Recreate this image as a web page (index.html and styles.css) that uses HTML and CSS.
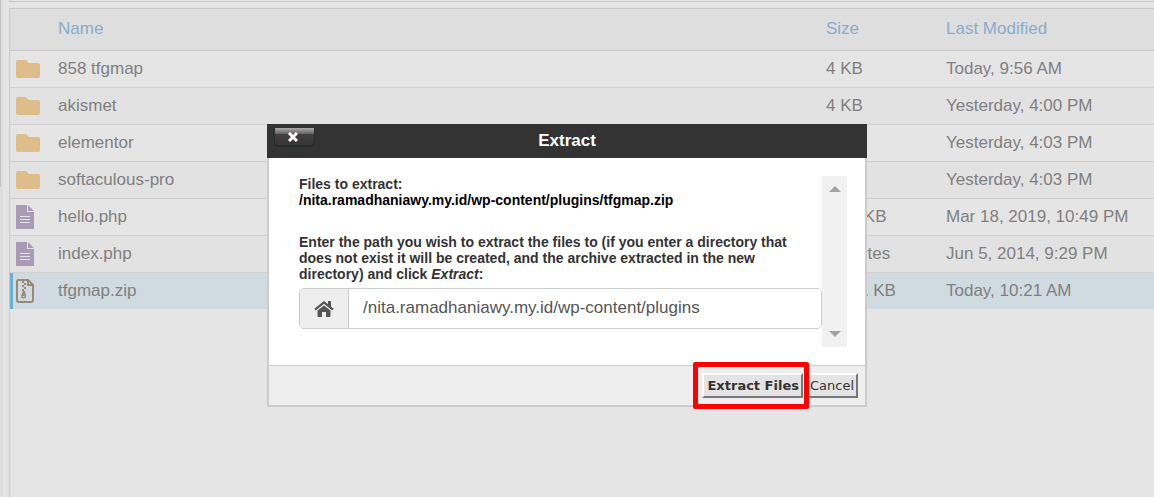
FILE: index.html
```html
<!DOCTYPE html>
<html lang="en">
<head>
<meta charset="utf-8">
<title>File Manager</title>
<link rel="stylesheet" href="styles.css">
</head>
<body>
<svg class="symbols" aria-hidden="true">
  <symbol id="folder" viewBox="0 0 24 18"><path d="M2 0h8l3 3h9a2 2 0 0 1 2 2v11a2 2 0 0 1-2 2H2a2 2 0 0 1-2-2V2a2 2 0 0 1 2-2z"/></symbol>
  <symbol id="file" viewBox="0 0 18 24"><path fill-rule="evenodd" d="M0 0h11v7h7v17H0zM12 0l6 6h-6zM4 11h10v1H4zM4 14h10v1H4zM4 17h10v1H4z"/></symbol>
  <symbol id="zip" viewBox="0 0 18 24"><path d="M2 1h10l5 5v15a2 2 0 0 1-2 2H3a2 2 0 0 1-2-2V2a1 1 0 0 1 1-1zM12 1v5h5" fill="none" stroke="currentColor" stroke-width="2"/><path d="M6 2h2v2H6zM8 4h2v2H8zM6 6h2v2H6zM8 8h2v2H8zM6 10h2v2H6z"/><path fill-rule="evenodd" d="M7 12h2l1 5a2.500 2.500 0 1 1-5 0zM6.500 17v1h2v-1z"/></symbol>
  <symbol id="home" viewBox="0 0 20 16"><path d="M10 4.400l6.500 5V15a1 1 0 0 1-1 1H12v-5H8v5H4.500a1 1 0 0 1-1-1V9.400z"/><path d="M1 8.600L10 1.400l9 7.200" fill="none" stroke="currentColor" stroke-width="2.200"/><path d="M14 0h3v7l-3-2z"/></symbol>
</svg>
<div class="app">
  <aside class="rail"><div class="rail-thumb"></div></aside>
  <main class="content">
    <div class="toolbar"></div>
    <div class="listing">
      <table class="files">
        <thead><tr><th class="col-icon"></th><th class="col-name">Name</th><th class="col-size">Size</th><th class="col-date">Last Modified</th></tr></thead>
        <tbody>
          <tr><td><svg class="folder"><use href="#folder"/></svg></td><td>858 tfgmap</td><td>4 KB</td><td>Today, 9:56 AM</td></tr>
          <tr><td><svg class="folder"><use href="#folder"/></svg></td><td>akismet</td><td>4 KB</td><td>Yesterday, 4:00 PM</td></tr>
          <tr><td><svg class="folder"><use href="#folder"/></svg></td><td>elementor</td><td>4 KB</td><td>Yesterday, 4:03 PM</td></tr>
          <tr><td><svg class="folder"><use href="#folder"/></svg></td><td>softaculous-pro</td><td>4 KB</td><td>Yesterday, 4:03 PM</td></tr>
          <tr><td><svg class="file"><use href="#file"/></svg></td><td>hello.php</td><td>2.52 KB</td><td>Mar 18, 2019, 10:49 PM</td></tr>
          <tr><td><svg class="file"><use href="#file"/></svg></td><td>index.php</td><td>28 bytes</td><td>Jun 5, 2014, 9:29 PM</td></tr>
          <tr class="selected"><td><svg class="file zip"><use href="#zip"/></svg></td><td>tfgmap.zip</td><td>10.21 KB</td><td>Today, 10:21 AM</td></tr>
        </tbody>
      </table>
    </div>
  </main>
</div>
<div class="overlay">
  <section class="dialog" role="dialog" aria-labelledby="dialog-title">
    <header class="dialog-head">
      <button class="close" type="button" aria-label="Close"><svg viewBox="0 0 10 10"><path d="M1 1l8 8M9 1L1 9"/></svg></button>
      <h1 class="dialog-title" id="dialog-title">Extract</h1>
    </header>
    <div class="dialog-body">
      <div class="scroll-area">
        <div class="form">
          <p class="text">Files to extract:<br><span class="path">/nita.ramadhaniawy.my.id/wp-content/plugins/tfgmap.zip</span></p>
          <label class="text prompt" for="target">Enter the path you wish to extract the files to (if you enter a directory that does not exist it will be created, and the archive extracted in the new directory) and click <em>Extract</em>:</label>
          <div class="field">
            <span class="addon"><svg class="home"><use href="#home"/></svg></span>
            <input class="target" id="target" type="text" value="/nita.ramadhaniawy.my.id/wp-content/plugins">
          </div>
        </div>
        <div class="scrollbar" aria-hidden="true">
          <svg class="arrow" viewBox="0 0 12 6"><path d="M0 6l6-6 6 6z"/></svg>
          <svg class="arrow" viewBox="0 0 12 6"><path d="M0 0l6 6 6-6z"/></svg>
        </div>
      </div>
    </div>
    <footer class="dialog-foot">
      <div class="highlight"><button class="btn primary" type="button">Extract Files</button></div>
      <button class="btn" type="button">Cancel</button>
    </footer>
  </section>
</div>
</body>
</html>
```
FILE: styles.css
```css
* { box-sizing: border-box; }
body {
  margin: 0;
  background: #e5e5e5;
  color: #808080;
  font: 17px/20px "Liberation Sans", Arial, sans-serif;
}
svg { display: block; fill: currentColor; }
.symbols { position: absolute; width: 0; height: 0; }
.app { display: flex; height: 100vh; overflow: hidden; }
.rail { width: 3px; background: #ddd; }
.rail-thumb { width: 1px; height: 187px; background: #c4c4c4; }
.content { flex: 1; display: flex; flex-direction: column; gap: 6px; padding-left: 6px; }
.toolbar { height: 2px; border: solid #c9c9c9; border-width: 0 0 1px 1px; }
.listing { flex: 1; border: solid #c9c9c9; border-width: 1px 0 0 1px; }
.files { width: 100%; border-collapse: separate; border-spacing: 0; table-layout: fixed; }
.files th {
  height: 42px;
  padding: 0 0 1px;
  border-bottom: 1px solid #c9c9c9;
  background: #dedede;
  color: #8aaccd;
  font-weight: 400;
  text-align: left;
}
.files td { height: 37px; padding: 0; border-bottom: 1px solid #d0d0d0; }
.files td:first-child { padding: 0 0 0 6px; }
.files tr:nth-child(even) td { background: #e2e2e2; }
.files .selected td { background: #d0dbe1; border-bottom-color: #e5e5e5; }
.files .selected td:first-child { box-shadow: inset 3px 0 #6bb1d1; }
.col-icon { width: 48px; }
.col-size { width: 120px; }
.col-date { width: 208px; }
.folder { width: 24px; height: 18px; color: #debd8a; }
.file { width: 18px; height: 24px; color: #a99bb6; }
.zip { color: #9d8872; }

.overlay {
  position: fixed;
  inset: 0;
  display: flex;
  justify-content: center;
  align-items: flex-start;
  padding: 124px 20px 0 0;
}
.dialog { width: 600px; background: #fff; }
.dialog-head {
  position: relative;
  padding: 7px 0;
  background: #333;
  color: #fff;
  text-align: center;
}
.dialog-title { margin: 0; font-size: 17px; line-height: 20px; }
.close {
  position: absolute;
  top: 4px;
  left: 7px;
  width: 41px;
  height: 19px;
  padding: 0 0 0 13px;
  border: solid #222b2e;
  border-width: 0 1px 2px;
  border-radius: 0 0 5px 5px;
  background: linear-gradient(#aaa, #666 33%, #443e3e 34%, #383535);
  color: #fff;
}
.close svg { width: 10px; height: 10px; stroke: #fff; stroke-width: 3; }
.dialog-body { padding: 18px; border: solid #ccc; border-width: 0 2px; }
.scroll-area { display: flex; margin-left: 12px; height: 171px; }
.form { flex: 1; }
.text { display: block; margin: 0; color: #333; font-size: 14px; line-height: 16px; font-weight: 700; }
.path { color: #000; }
.prompt { margin: 26px 0 6px; }
.field { display: flex; height: 41px; border: 1px solid #ccc; border-radius: 5px; overflow: hidden; }
.addon {
  width: 49px;
  display: grid;
  place-items: center;
  border-right: 1px solid #ccc;
  background: #eee;
  color: #555;
}
.home { width: 20px; height: 16px; }
.target { flex: 1; min-width: 0; padding: 0 14px 2px; border: 0; outline: 0; background: #fff; color: #555; font: inherit; }
.scrollbar {
  width: 25px;
  display: flex;
  flex-direction: column;
  justify-content: space-between;
  align-items: center;
  padding: 10px 0;
  background: #f1f1f1;
  color: #a3a3a3;
}
.arrow { width: 12px; height: 6px; }
.dialog-foot {
  height: 42px;
  display: flex;
  justify-content: flex-end;
  align-items: center;
  padding-right: 7px;
  border: solid #ccc;
  border-width: 1px 2px 2px;
  background: #eee;
}
.highlight {
  position: relative;
  z-index: 1;
  margin: -5px -4px -5px 0;
  padding: 6px 1px 6px 4px;
  border: 5px solid #f00;
  border-radius: 2px;
}
.btn {
  display: block;
  height: 25px;
  padding: 0 2px 0 3px;
  border: 2px solid;
  border-color: #fff #777 #777 #fff;
  background: #e4e4e4;
  color: #333;
  font: 13px/20px "DejaVu Sans", Verdana, sans-serif;
}
.primary { font-weight: 700; }
```
